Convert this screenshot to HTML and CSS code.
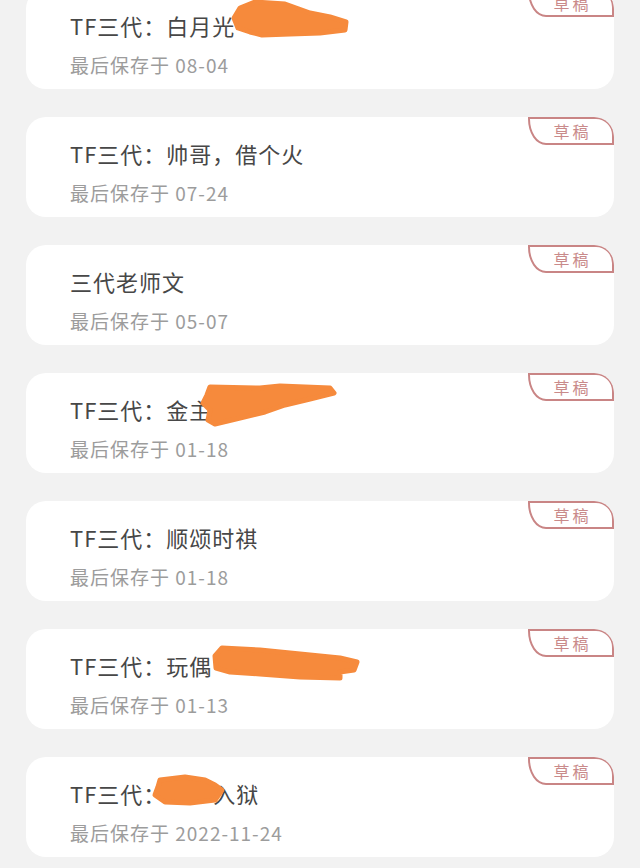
FILE: index.html
```html
<!DOCTYPE html>
<html lang="zh-CN">
<head>
<meta charset="utf-8">
<title>草稿</title>
<link rel="stylesheet" href="styles.css">
</head>
<body>
<div class="list">
  <div class="card">
    <div class="title">TF三代：白月光</div>
    <div class="sub">最后保存于 08-04</div>
    <span class="tag">草稿</span>
    <svg class="scribble" viewBox="0 0 588 100" preserveAspectRatio="none"><path d="M214 19 L229 13 L259 15 L284 24 L304 28 L320 33 L319 41 L294 44 L264 45 L236 46 L224 43 L212 39 L208 29 Z"/></svg>
  </div>
  <div class="card">
    <div class="title">TF三代：帅哥，借个火</div>
    <div class="sub">最后保存于 07-24</div>
    <span class="tag">草稿</span>
  </div>
  <div class="card">
    <div class="title">三代老师文</div>
    <div class="sub">最后保存于 05-07</div>
    <span class="tag">草稿</span>
  </div>
  <div class="card">
    <div class="title">TF三代：金主</div>
    <div class="sub">最后保存于 01-18</div>
    <span class="tag">草稿</span>
    <svg class="scribble" viewBox="0 0 588 100" preserveAspectRatio="none"><path d="M184 14 L234 15 L254 13 L304 15 L308 20 L284 26 L259 32 L239 39 L214 45 L189 51 L182 47 L184 37 L177 30 L181 22 Z"/></svg>
  </div>
  <div class="card">
    <div class="title">TF三代：顺颂时祺</div>
    <div class="sub">最后保存于 01-18</div>
    <span class="tag">草稿</span>
  </div>
  <div class="card">
    <div class="title">TF三代：玩偶</div>
    <div class="sub">最后保存于 01-13</div>
    <span class="tag">草稿</span>
    <svg class="scribble" viewBox="0 0 588 100" preserveAspectRatio="none"><path d="M196 19 L234 21 L274 25 L314 29 L331 33 L328 41 L314 43 L314 49 L274 48 L234 45 L204 43 L190 39 L189 27 Z"/></svg>
  </div>
  <div class="card">
    <div class="title">TF三代：<span class="redact"></span>入狱</div>
    <div class="sub">最后保存于 2022-11-24</div>
    <span class="tag">草稿</span>
    <svg class="scribble" viewBox="0 0 588 100" preserveAspectRatio="none"><path d="M134 23 L159 20 L179 23 L189 28 L196 33 L189 43 L164 46 L139 45 L129 38 L132 30 Z"/></svg>
  </div>
</div>
</body>
</html>
```
FILE: styles.css
```css
html, body {
  margin: 0;
  padding: 0;
  background: #f2f2f2;
  height: 100%;
  overflow: hidden;
}
body {
  font-family: "Noto Sans CJK SC", "Noto Sans", sans-serif;
}
.list {
  display: flex;
  flex-direction: column;
  gap: 28px;
  margin-top: -11px;
  padding: 0 26px;
}
.card {
  position: relative;
  background: #ffffff;
  border-radius: 20px;
  height: 100px;
  box-sizing: border-box;
  padding: 21px 0 0 44px;
  display: flex;
  flex-direction: column;
  gap: 12px;
  overflow: hidden;
}
.title {
  font-size: 22px;
  line-height: 30px;
  color: #474747;
  letter-spacing: 1px;
  white-space: nowrap;
}
.sub {
  font-size: 19px;
  line-height: 26px;
  color: #9c9c9c;
  letter-spacing: 1px;
  white-space: nowrap;
}
.redact {
  display: inline-block;
  width: 47px;
}
.tag {
  position: absolute;
  top: 0;
  right: 0;
  width: 86px;
  height: 28px;
  box-sizing: border-box;
  border: 2px solid #c98585;
  border-radius: 0 18px 0 18px / 0 18px 0 26px;
  color: #c98a8a;
  font-size: 16px;
  line-height: 24px;
  letter-spacing: 3px;
  text-align: center;
  padding-left: 3px;
}
.scribble {
  position: absolute;
  left: 0;
  top: 0;
  width: 100%;
  height: 100%;
  pointer-events: none;
}
.scribble path {
  fill: #f68a3c;
  stroke: #f68a3c;
  stroke-width: 5;
  stroke-linejoin: round;
}
```
